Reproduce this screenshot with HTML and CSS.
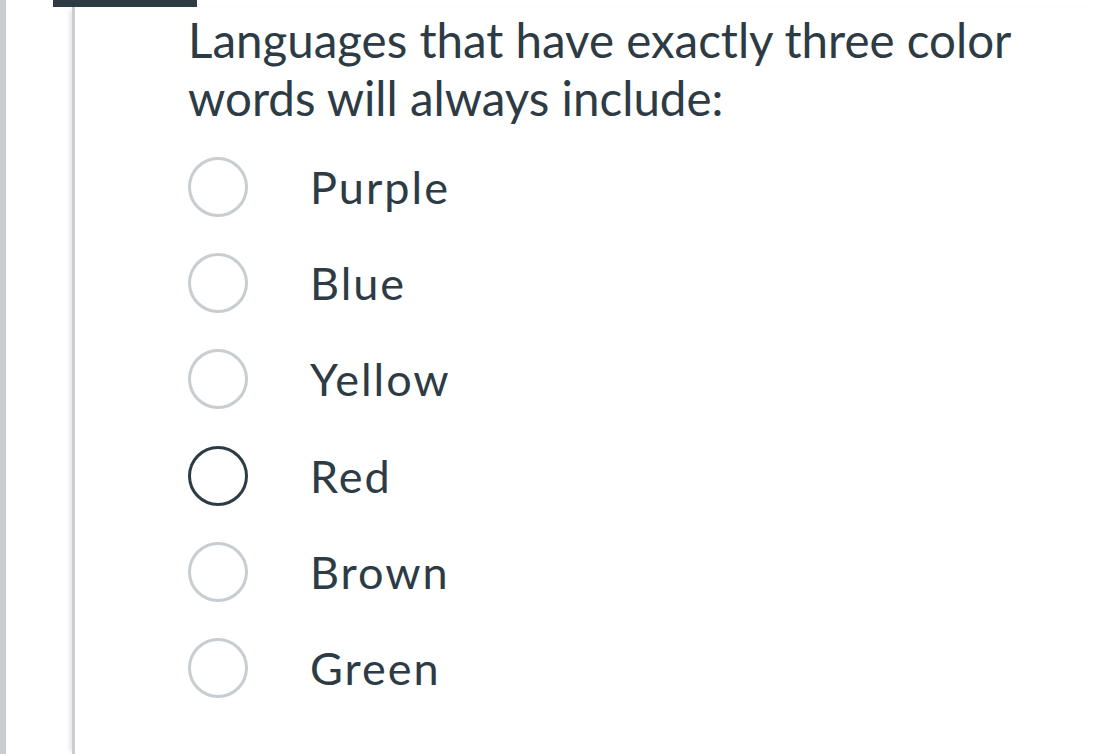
FILE: index.html
```html
<!DOCTYPE html>
<html>
<head>
<meta charset="utf-8">
<link rel="stylesheet" href="styles.css">
</head>
<body>
<div class="page">
  <div class="strip"></div>
  <div class="main">
    <div class="tabbar"></div>
    <div class="panel">
      <div class="question">Languages that have exactly three color words will always include:</div>
      <div class="options">
        <label class="option"><span class="radio"></span><span class="label">Purple</span></label>
        <label class="option"><span class="radio"></span><span class="label">Blue</span></label>
        <label class="option"><span class="radio"></span><span class="label">Yellow</span></label>
        <label class="option"><span class="radio radio-active"></span><span class="label">Red</span></label>
        <label class="option"><span class="radio"></span><span class="label">Brown</span></label>
        <label class="option"><span class="radio"></span><span class="label">Green</span></label>
      </div>
    </div>
  </div>
</div>
</body>
</html>
```
FILE: styles.css
```css
html, body {
  margin: 0;
  padding: 0;
  background: #ffffff;
  height: 100%;
}
body {
  font-family: Lato, "Noto Sans", sans-serif;
  color: #2d3b45;
  overflow: hidden;
}
.page {
  display: flex;
  height: 754px;
}
.strip {
  width: 6px;
  background: #c7cdd1;
  flex: none;
}
.main {
  margin-left: 47px;
  display: flex;
  flex-direction: column;
  flex: 1;
}
.tabbar {
  width: 144px;
  height: 7px;
  background: #2d3b45;
  flex: none;
}
.panel {
  flex: 1;
  margin-left: 19px;
  border-left: 3px solid #c7cdd1;
  box-shadow: -5px 0 5px -3px rgba(0,0,0,0.12);
  padding-left: 113px;
  padding-top: 4px;
}
.question {
  font-size: 47.5px;
  line-height: 58px;
  width: 860px;
}
.options {
  display: flex;
  flex-direction: column;
  margin-top: 12px;
}
.option {
  display: flex;
  align-items: center;
  height: 96.2px;
}
.radio {
  width: 54px;
  height: 54px;
  border: 3px solid #c7cdd1;
  border-radius: 50%;
  box-sizing: content-box;
  flex: none;
}
.radio-active {
  border-color: #2d3b45;
}
.label {
  margin-left: 62px;
  font-size: 45px;
  letter-spacing: 2px;
}
```
